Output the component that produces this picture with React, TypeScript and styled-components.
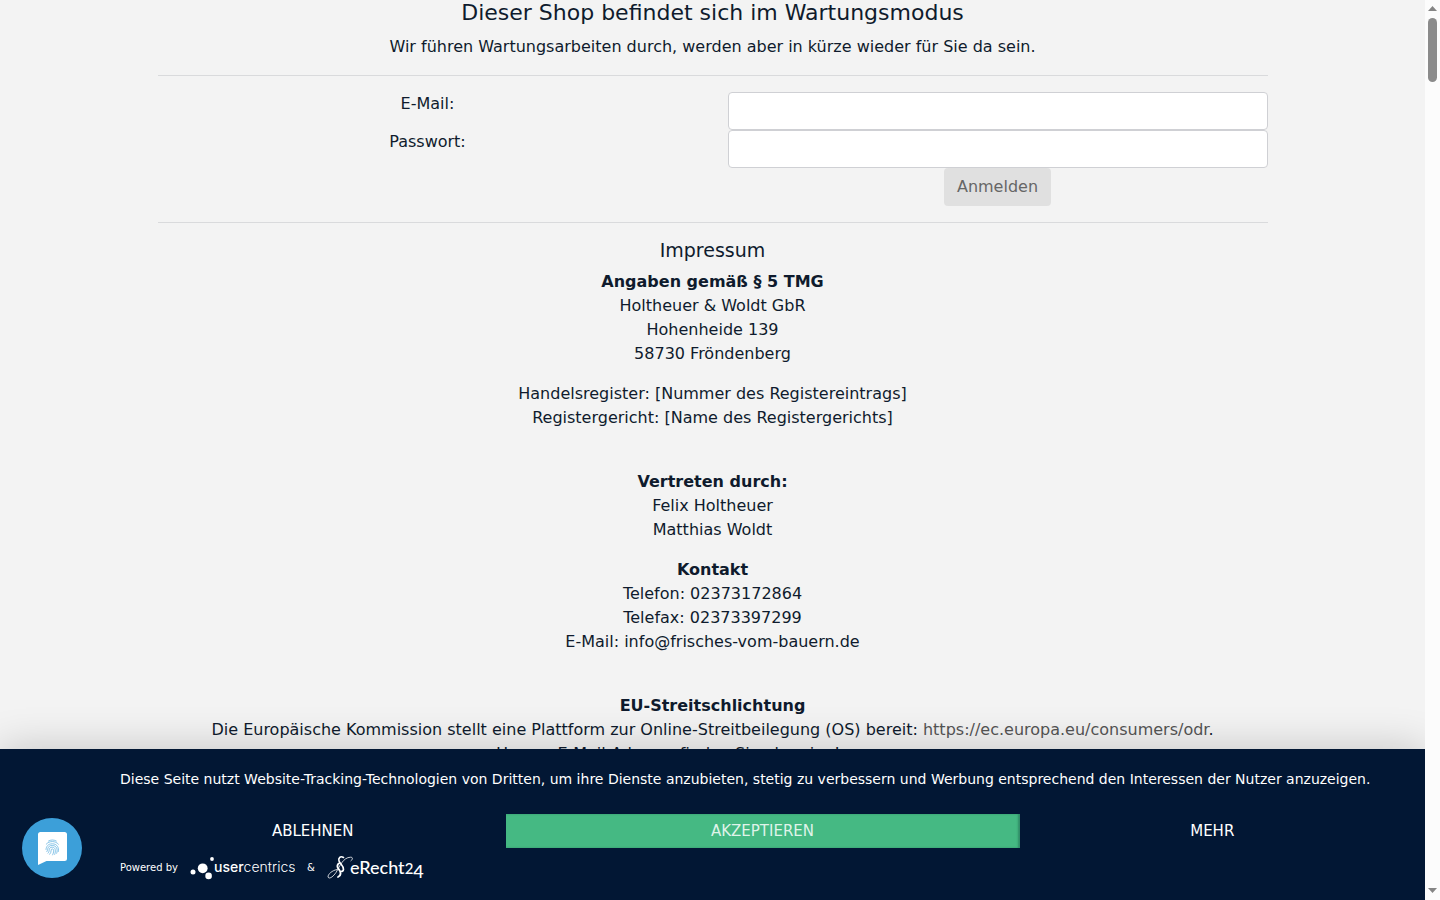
import React from "react";
import styled, { createGlobalStyle } from "styled-components";

const GlobalStyle = createGlobalStyle`
  *, *::before, *::after { box-sizing: border-box; }
  body {
    margin: 0;
    background: #f3f3f3;
    color: #0f1b2d;
    font-family: "DejaVu Sans", sans-serif;
    font-size: 16px;
    line-height: 24px;
  }
`;

const Shell = styled.div`
  display: grid;
  grid-template-columns: minmax(0, 1fr) 15px;
  height: 100vh;
  overflow: hidden;
`;

const Viewport = styled.div`
  display: grid;
  grid-template-rows: minmax(0, 1fr) auto;
  height: 100vh;
  min-width: 0;
  overflow: hidden;
`;

const Content = styled.main`
  overflow: hidden;
  text-align: center;
`;

const Container = styled.div`
  max-width: 1140px;
  margin: 0 auto;
  padding: 0 15px;
`;

const Title = styled.h1`
  margin: 0 0 9px;
  font-size: 22px;
  line-height: 26px;
  font-weight: 400;
`;

const Subtitle = styled.h2`
  margin: 0 0 8px;
  font-size: 19px;
  line-height: 23px;
  font-weight: 400;
`;

const Paragraph = styled.p<{ $spaced?: boolean }>`
  margin: 0 0 ${(p) => (p.$spaced ? 40 : 16)}px;
`;

const Divider = styled.hr`
  margin: 16px 0;
  border: 0;
  border-top: 1px solid #d9dadc;
`;

const LoginForm = styled.form`
  display: grid;
  grid-template-columns: 1fr 1fr;
  column-gap: 30px;
`;

const Field = styled.input`
  width: 100%;
  height: 38px;
  padding: 6px 12px;
  border: 1px solid #cfd0d4;
  border-radius: 4px;
  background: #fff;
  font: inherit;
`;

const SubmitButton = styled.button`
  grid-column: 2;
  justify-self: center;
  height: 38px;
  padding: 0 13px;
  border: 0;
  border-radius: 4px;
  background: #e0e0e0;
  color: #666;
  font: inherit;
`;

const TextLink = styled.a`
  color: #555;
  text-decoration: none;
`;

const Banner = styled.aside`
  position: relative;
  display: grid;
  grid-template-columns: 100px minmax(0, 1fr);
  padding: 18px 20px 12px;
  background: #021734;
  color: #fff;
  box-shadow: 0 0 40px rgba(0, 0, 0, 0.2);
`;

const BannerBody = styled.div`
  min-width: 0;
`;

const Notice = styled.p`
  margin: 0 0 23px;
  font-size: 14px;
  line-height: 24px;
`;

const Choices = styled.div`
  display: grid;
  grid-template-columns: 3fr 4fr 3fr;
`;

const Choice = styled.button<{ $primary?: boolean }>`
  height: 34px;
  padding: 0;
  border: 0;
  background: ${(p) => (p.$primary ? "#45b983" : "transparent")};
  box-shadow: ${(p) => (p.$primary ? "inset -2px 0 2px rgba(0, 40, 40, 0.3)" : "none")};
  color: ${(p) => (p.$primary ? "#dff3e9" : "#fff")};
  font: 15px "DejaVu Sans", sans-serif;
`;

const Credits = styled.div`
  display: flex;
  align-items: center;
  gap: 12px;
  height: 40px;
  font-size: 10px;
`;

const FingerprintButton = styled.button`
  align-self: end;
  width: 60px;
  height: 60px;
  margin: 0 2px 10px;
  padding: 0;
  border: 0;
  border-radius: 50%;
  background: #3c9fd9;
`;

const Logo = styled.svg`
  display: block;
  flex: none;
`;

const ScrollTrack = styled.div`
  display: flex;
  flex-direction: column;
  align-items: center;
  background: #fcfcfc;
`;

const ScrollThumb = styled.div`
  width: 9px;
  height: 64px;
  margin-bottom: auto;
  border-radius: 5px;
  background: #8b8b8b;
`;

const ScrollArrow = ({ down }: { down?: boolean }) => (
  <Logo width="15" height="18" viewBox="0 0 15 18" aria-hidden="true">
    <path d={down ? "M3 6h9l-4.500 5z" : "M3 11h9l-4.500-5z"} fill="#858585" />
  </Logo>
);

const Fingerprint = () => (
  <Logo width="60" height="60" viewBox="0 0 60 60" aria-hidden="true">
    <path d="M18.500 14h24a2.500 2.500 0 0 1 2.500 2.500v24a2.500 2.500 0 0 1-2.500 2.500H24.500L16 47V16.500a2.500 2.500 0 0 1 2.500-2.500z" fill="#fff" />
    <g fill="none" stroke="#3c9fd9" strokeWidth="0.6" strokeLinecap="round">
      <path d="M26.500 23c2.400-1.400 5.400-1.400 7.800 0" />
      <path d="M24.200 26.200c3-3.600 9.200-3.600 12.200 0" />
      <path d="M24 31.500c.2-3 2-5.700 6.300-5.700 5 0 6.800 4 6.100 7.700" />
      <path d="M24.700 33.800c2-1.500-.3-6.300 5.600-6.300 4.700 0 5.600 4.300 4.400 7.800" />
      <path d="M26 35.200c2.300-2-.2-6 4.300-6 3.400 0 3.700 3.800 2.400 7.200" />
      <path d="M27.700 36.300c2.400-2.300.5-5.400 2.600-5.400 2 0 1.600 3.400.3 6" />
    </g>
  </Logo>
);

const UsercentricsLogo = () => (
  <Logo width="105" height="26" viewBox="0 0 105 26" role="img" aria-label="usercentrics">
    <g fill="#fff">
      <circle cx="3" cy="17" r="2.500" />
      <circle cx="12.700" cy="13.300" r="4.900" />
      <circle cx="22" cy="4" r="1.900" />
      <circle cx="18.600" cy="20.900" r="3.300" />
      <text x="24" y="17" fontFamily="Inter, sans-serif" fontSize="14">
        <tspan fontWeight="500">user</tspan>
        <tspan fontWeight="300">centrics</tspan>
      </text>
    </g>
  </Logo>
);

const ERechtLogo = () => (
  <Logo width="99" height="28" viewBox="0 0 99 28" role="img" aria-label="eRecht24">
    <g fill="none" stroke="#fff" strokeLinecap="round">
      <path d="M10 15.500c-5 1-9 4.500-9 7.500 1 2.500 5 0 8-4.500C13 12 16 3.500 23.500 3.200c3 0 2 2.300.5 3.600" strokeWidth="0.8" />
      <path d="M16.500 3.500c-3-2-5.500.3-4.500 3.500 1 3 5 5 4.500 8.500-.3 1.500-1.500 2-2.500 2" strokeWidth="1.600" />
      <path d="M12.500 9c-3 1.500-2.500 4-.5 6.500 2 2.500 2.500 6-1 7.500" strokeWidth="1.900" />
    </g>
    <text x="23" y="20" fill="#fff" fontFamily="Lato, sans-serif" fontSize="18" fontWeight="500">
      eRecht<tspan fontSize="15">2</tspan><tspan dy="4" fontSize="18">4</tspan>
    </text>
  </Logo>
);

export default function App() {
  return (
    <>
      <GlobalStyle />
      <Shell>
        <Viewport>
          <Content>
            <Container>
              <Title>Dieser Shop befindet sich im Wartungsmodus</Title>
              <Paragraph>Wir führen Wartungsarbeiten durch, werden aber in kürze wieder für Sie da sein.</Paragraph>
              <Divider />
              <LoginForm onSubmit={(e) => e.preventDefault()}>
                <label htmlFor="email">E-Mail:</label>
                <Field id="email" type="email" />
                <label htmlFor="password">Passwort:</label>
                <Field id="password" type="password" />
                <SubmitButton type="submit">Anmelden</SubmitButton>
              </LoginForm>
              <Divider />
              <Subtitle>Impressum</Subtitle>
              <Paragraph>
                <strong>Angaben gemäß § 5 TMG</strong><br />
                Holtheuer &amp; Woldt GbR<br />
                Hohenheide 139<br />
                58730 Fröndenberg
              </Paragraph>
              <Paragraph $spaced>
                Handelsregister: [Nummer des Registereintrags]<br />
                Registergericht: [Name des Registergerichts]
              </Paragraph>
              <Paragraph>
                <strong>Vertreten durch:</strong><br />
                Felix Holtheuer<br />
                Matthias Woldt
              </Paragraph>
              <Paragraph $spaced>
                <strong>Kontakt</strong><br />
                Telefon: 02373172864<br />
                Telefax: 02373397299<br />
                E-Mail: info@frisches-vom-bauern.de
              </Paragraph>
              <Paragraph>
                <strong>EU-Streitschlichtung</strong><br />
                Die Europäische Kommission stellt eine Plattform zur Online-Streitbeilegung (OS) bereit:{" "}
                <TextLink href="https://ec.europa.eu/consumers/odr">https://ec.europa.eu/consumers/odr</TextLink>.<br />
                Unsere E-Mail-Adresse finden Sie oben im Impressum.
              </Paragraph>
            </Container>
          </Content>
          <Banner aria-label="Datenschutz">
            <FingerprintButton type="button" aria-label="Datenschutzeinstellungen">
              <Fingerprint />
            </FingerprintButton>
            <BannerBody>
              <Notice>
                Diese Seite nutzt Website-Tracking-Technologien von Dritten, um ihre Dienste anzubieten, stetig zu
                verbessern und Werbung entsprechend den Interessen der Nutzer anzuzeigen.
              </Notice>
              <Choices>
                <Choice type="button">ABLEHNEN</Choice>
                <Choice type="button" $primary>AKZEPTIEREN</Choice>
                <Choice type="button">MEHR</Choice>
              </Choices>
              <Credits>
                <span>Powered by</span>
                <UsercentricsLogo />
                <span>&amp;</span>
                <ERechtLogo />
              </Credits>
            </BannerBody>
          </Banner>
        </Viewport>
        <ScrollTrack aria-hidden="true">
          <ScrollArrow />
          <ScrollThumb />
          <ScrollArrow down />
        </ScrollTrack>
      </Shell>
    </>
  );
}
